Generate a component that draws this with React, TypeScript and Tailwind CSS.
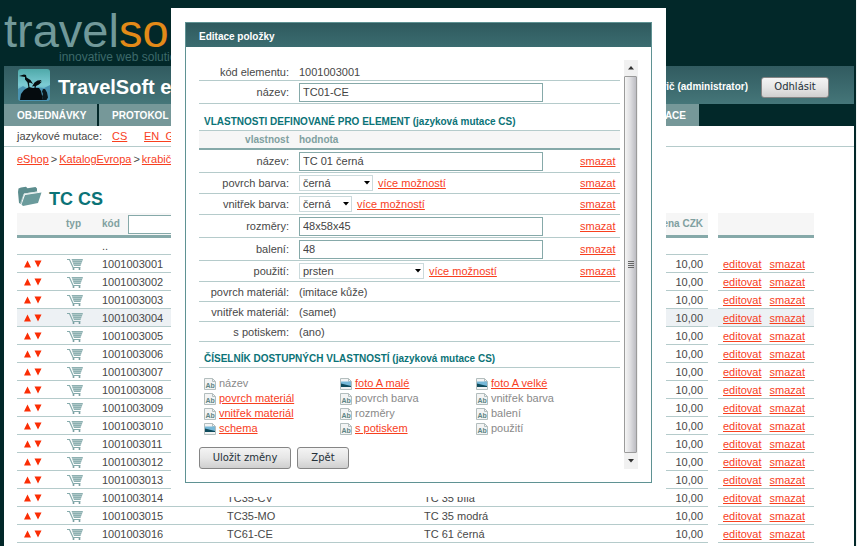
import type { ReactNode } from 'react';

type Item = { code: string; sku?: string; name?: string; active?: boolean };

const items: Item[] = [
  { code: '1001003001' },
  { code: '1001003002' },
  { code: '1001003003' },
  { code: '1001003004', active: true },
  { code: '1001003005' },
  { code: '1001003006' },
  { code: '1001003007' },
  { code: '1001003008' },
  { code: '1001003009' },
  { code: '1001003010' },
  { code: '1001003011' },
  { code: '1001003012' },
  { code: '1001003013' },
  { code: '1001003014', sku: 'TC35-CV', name: 'TC 35 bílá' },
  { code: '1001003015', sku: 'TC35-MO', name: 'TC 35 modrá' },
  { code: '1001003016', sku: 'TC61-CE', name: 'TC 61 černá' },
];

type Property = { label: string; kind: 'input' | 'select' | 'text'; value: string; width?: string };

const properties: Property[] = [
  { label: 'název', kind: 'input', value: 'TC 01 černá' },
  { label: 'povrch barva', kind: 'select', value: 'černá', width: 'w-[74px]' },
  { label: 'vnitřek barva', kind: 'select', value: 'černá', width: 'w-[53px]' },
  { label: 'rozměry', kind: 'input', value: '48x58x45' },
  { label: 'balení', kind: 'input', value: '48' },
  { label: 'použití', kind: 'select', value: 'prsten', width: 'w-[125px]' },
  { label: 'povrch materiál', kind: 'text', value: '(imitace kůže)' },
  { label: 'vnitřek materiál', kind: 'text', value: '(samet)' },
  { label: 's potiskem', kind: 'text', value: '(ano)' },
];

const rowHeight = { input: 'h-[23px]', select: 'h-[21px]', text: 'h-[20px]' };

const available = [
  { label: 'název' },
  { label: 'foto A malé', image: true, link: true },
  { label: 'foto A velké', image: true, link: true },
  { label: 'povrch materiál', link: true },
  { label: 'povrch barva' },
  { label: 'vnitřek barva' },
  { label: 'vnitřek materiál', link: true },
  { label: 'rozměry' },
  { label: 'balení' },
  { label: 'schema', image: true, link: true },
  { label: 's potiskem', link: true },
  { label: 'použití' },
];

function Link({ children }: { children: ReactNode }) {
  return <a href="#" className="text-[#f8401e] underline">{children}</a>;
}

function Button({ children, className = '' }: { children: ReactNode; className?: string }) {
  return (
    <button
      type="button"
      className={`rounded-[3px] border border-[#858585] bg-linear-to-b from-[#f4f4f4] via-[#e6e6e6] to-[#cfcfcf] font-['DejaVu_Sans',sans-serif] text-[10px] text-[#243038] ${className}`}
    >
      {children}
    </button>
  );
}

function BirdsLogo() {
  return (
    <svg viewBox="0 0 32 32" className="h-8 w-8">
      <defs>
        <linearGradient id="sky" x1="0" y1="0" x2="0" y2="1">
          <stop offset="0" stopColor="#4fa9a9" />
          <stop offset="0.5" stopColor="#7ccbd4" />
          <stop offset="1" stopColor="#3d88a6" />
        </linearGradient>
      </defs>
      <rect width="32" height="32" rx="3" fill="url(#sky)" />
      <path d="M0 20l5-3 5 3 8-2 8 1 6-3v13a3 3 0 0 1-3 3H3a3 3 0 0 1-3-3z" fill="#4a94b2" />
      <path d="M2 31l1-6 3-4 5-3 4 1 6 0 2 3 2 9z" fill="#050b0e" />
      <path d="M1 7l5-1.500 2 0.500 0.500 2.500 4 2.500 2.500 4-3-1.500-1 0.500 0.500 4.500h-1l-1-5-2.500-3L7 8z" fill="#050b0e" />
      <path d="M14 17.500l2.500-4 3-2L23.500 11l-1.500 2 2-0.500-3 3-3 1.500-0.500 2.500h-1V17z" fill="#050b0e" />
      <path d="M24 22.500l1-2.500 2 0 2 3.500 1 5-1.500 2.500h-3.500l-1-3.500 1-2.500z" fill="#0a181d" />
    </svg>
  );
}

function FolderIcon() {
  return (
    <svg viewBox="0 0 26 21" className="h-[21px] w-[26px]">
      <path d="M1 6l0.500-3.500L4 1.500l5-0.800 1.500 1.500 8-1.200 1.500 1.500v3L7 7.500 4 18l-2-1z" fill="#5c8d8e" />
      <path d="M4.500 18.500L8 9l16.500-2.500L21 17 6 20z" fill="#6b9b9c" />
      <path d="M3.500 17.500L7 8l14-2" fill="none" stroke="#c4d8d8" strokeWidth="0.700" />
    </svg>
  );
}

function CartIcon() {
  return (
    <svg viewBox="0 0 16 12" className="h-3 w-4">
      <path d="M0 1.500h2.500l3.500 8h7.500" fill="none" stroke="#86abac" strokeWidth="1.200" />
      <path d="M4.500 1H16l-2.500 7H7z" fill="#8db0b1" />
      <path d="M5 2.500h10.500M6 4.500h9M7 6.500h7" stroke="#c2d6d6" strokeWidth="0.600" />
      <circle cx="6.500" cy="11" r="1" fill="#6f9899" />
      <circle cx="12.500" cy="11" r="1" fill="#6f9899" />
    </svg>
  );
}

function SortArrows() {
  return (
    <svg viewBox="0 0 18 8" className="h-2 w-[18px]" fill="#fb2d04">
      <path d="M0 7.500L3.500 0.500L7 7.500zM10.500 0.500h7L14 7.500z" />
    </svg>
  );
}

function PropertyIcon({ image }: { image?: boolean }) {
  return (
    <svg viewBox="0 0 12 12" className="h-3 w-3 shrink-0">
      <path d="M0.500 0.500h8l3 3v8h-11z" fill="#f3f4f4" stroke="#b3bebe" />
      <path d="M8.500 0.500v3h3" fill="none" stroke="#b3bebe" />
      {image ? (
        <>
          <path d="M1 3.500h10v5.500H1z" fill="#76b8d8" />
          <path d="M1 5.500l4 1 6 1.500v1H1z" fill="#0e4b5c" />
        </>
      ) : (
        <text x="1.500" y="9.500" fontSize="7" fontWeight="bold" fill="#5f8585" fontFamily="Liberation Sans, sans-serif">Ab</text>
      )}
    </svg>
  );
}

function TextInput({ id, value }: { id: string; value: string }) {
  return <input id={id} defaultValue={value} className="block h-[19px] w-[244px] border border-[#86a9a9] bg-white px-[3px] text-[11px] text-[#444]" />;
}

function SelectBox({ id, value, width }: { id: string; value: string; width?: string }) {
  return (
    <div className="flex items-center gap-[5px]">
      <span className={`relative block ${width}`}>
        <select id={id} className="block h-4 w-full appearance-none border border-[#cbdadc] bg-white px-[3px] text-[11px] leading-[14px] text-[#444]">
          <option>{value}</option>
        </select>
        <svg viewBox="0 0 6 4" className="pointer-events-none absolute top-1.5 right-[3px] h-1 w-1.5">
          <path d="M0 0h6L3 3.500z" fill="#000" />
        </svg>
      </span>
      <Link>více možností</Link>
    </div>
  );
}

function ScrollBar() {
  return (
    <div className="flex w-3.5 flex-col bg-[#f1f1f1]">
      <button type="button" aria-label="Nahoru" className="flex h-4 items-center justify-center">
        <svg viewBox="0 0 6 4" className="h-1 w-1.5"><path d="M0 3.500h6L3 0z" fill="#333" /></svg>
      </button>
      <div className="flex w-[13px] flex-1 flex-col items-center justify-center gap-px rounded-[1px] border border-[#9b9b9b] bg-linear-to-r from-[#f5f5f5] via-[#dddde0] to-[#bcbcc2]">
        <span className="h-px w-1.5 bg-[#666]" />
        <span className="h-px w-1.5 bg-[#666]" />
        <span className="h-px w-1.5 bg-[#666]" />
        <span className="h-px w-1.5 bg-[#666]" />
      </div>
      <button type="button" aria-label="Dolů" className="flex h-4 items-center justify-center">
        <svg viewBox="0 0 6 4" className="h-1 w-1.5"><path d="M0 0h6L3 3.500z" fill="#333" /></svg>
      </button>
    </div>
  );
}

function EditDialog() {
  return (
    <div role="dialog" aria-labelledby="dialog-title" className="absolute top-2 left-[171px] w-[495px] bg-white px-[14px] py-[14px]">
      <div className="border border-[#5f9293]">
        <h2 id="dialog-title" className="flex h-[24px] items-center bg-linear-to-b from-[#2f5a5e] to-[#3b6c70] px-[13px] pt-1 text-[10px] font-bold text-white">
          Editace položky
        </h2>
        <div className="flex gap-1 p-[13px]">
          <form className="flex-1 pt-1">
            <table className="w-full table-fixed border-separate border-spacing-0">
              <colgroup>
                <col className="w-[100px]" />
                <col />
              </colgroup>
              <tbody>
                <tr className="h-[17px]">
                  <td className="border-b border-[#b5cbcb] pr-2.5 text-right">kód elementu:</td>
                  <td className="border-b border-[#b5cbcb]">1001003001</td>
                </tr>
                <tr className="h-[23px]">
                  <td className="border-b border-[#b5cbcb] pr-2.5 text-right"><label htmlFor="element">název:</label></td>
                  <td className="border-b border-[#b5cbcb]"><TextInput id="element" value="TC01-CE" /></td>
                </tr>
              </tbody>
            </table>
            <h3 className="flex h-[26px] items-end px-[5px] pb-px text-[10px] font-bold text-[#0b7377]">
              VLASTNOSTI DEFINOVANÉ PRO ELEMENT (jazyková mutace CS)
            </h3>
            <table className="w-full table-fixed border-separate border-spacing-0">
              <colgroup>
                <col className="w-[100px]" />
                <col />
                <col className="w-[40px]" />
              </colgroup>
              <thead>
                <tr className="h-[20px] bg-[#f6f6f6] text-[10px] text-[#80a0a0]">
                  <th className="border-t border-b-2 border-t-[#b5cbcb] border-b-[#86a9a9] pr-2.5 text-right">vlastnost</th>
                  <th className="border-t border-b-2 border-t-[#b5cbcb] border-b-[#86a9a9] text-left">hodnota</th>
                  <th className="border-t border-b-2 border-t-[#b5cbcb] border-b-[#86a9a9]" />
                </tr>
              </thead>
              <tbody>
                {properties.map(p => (
                  <tr key={p.label} className={rowHeight[p.kind]}>
                    <td className="border-b border-[#b5cbcb] pr-2.5 text-right">
                      {p.kind === 'text' ? `${p.label}:` : <label htmlFor={p.label}>{p.label}:</label>}
                    </td>
                    <td className="border-b border-[#b5cbcb]">
                      {p.kind === 'input' && <TextInput id={p.label} value={p.value} />}
                      {p.kind === 'select' && <SelectBox id={p.label} value={p.value} width={p.width} />}
                      {p.kind === 'text' && p.value}
                    </td>
                    <td className="border-b border-[#b5cbcb] pr-[5px] text-right">{p.kind !== 'text' && <Link>smazat</Link>}</td>
                  </tr>
                ))}
              </tbody>
            </table>
            <h3 className="flex h-[26px] items-end border-b border-[#b5cbcb] px-[5px] pb-px text-[10px] font-bold text-[#0b7377]">
              ČÍSELNÍK DOSTUPNÝCH VLASTNOSTÍ (jazyková mutace CS)
            </h3>
            <ul className="grid grid-cols-[136px_136px_1fr] pt-2 pl-[5px] leading-[15px]">
              {available.map(a => (
                <li key={a.label} className="flex items-center gap-[3px] text-[#8a8a8a]">
                  <PropertyIcon image={a.image} />
                  {a.link ? <Link>{a.label}</Link> : a.label}
                </li>
              ))}
            </ul>
            <div className="flex gap-1.5 pt-[11px]">
              <Button className="h-[22px] w-[92px]">Uložit změny</Button>
              <Button className="h-[22px] w-[52px]">Zpět</Button>
            </div>
          </form>
          <ScrollBar />
        </div>
      </div>
    </div>
  );
}

function CatalogTable() {
  const line = 'border-b border-[#b5cbcb]';
  const head = 'border-b-[3px] border-[#86a9a9] bg-[#f6f6f6]';
  return (
    <table className="w-full table-fixed border-separate border-spacing-0">
      <colgroup>
        <col className="w-10" />
        <col className="w-10" />
        <col className="w-[125px]" />
        <col className="w-[197px]" />
        <col />
        <col className="w-[60px]" />
        <col className="w-2.5" />
        <col className="w-24" />
      </colgroup>
      <thead>
        <tr className="h-[25px] text-left text-[10px] text-[#80a0a0]">
          <th className={head} />
          <th className={`${head} pl-[9px]`}>typ</th>
          <th className={`${head} pl-[5px]`}>
            <label className="flex items-center gap-2">
              kód
              <input className="h-[19px] w-20 border border-[#86a9a9] bg-white" />
            </label>
          </th>
          <th className={head} />
          <th className={head} />
          <th className={`${head} pr-[5px] text-right whitespace-nowrap`}>cena CZK</th>
          <th />
          <th className={head} />
        </tr>
      </thead>
      <tbody>
        <tr className="h-[17px]">
          <td className={line} />
          <td className={line} />
          <td className={`${line} pl-[5px]`}>..</td>
          <td className={line} />
          <td className={line} />
          <td className={line} />
          <td />
          <td />
        </tr>
        {items.map(item => (
          <tr key={item.code} className={`h-[18px] ${item.active ? 'bg-[#edf1f4]' : ''}`}>
            <td className={`${line} pl-[7px]`}><SortArrows /></td>
            <td className={`${line} pl-2.5`}><CartIcon /></td>
            <td className={`${line} pl-[5px]`}>{item.code}</td>
            <td className={`${line} pl-[5px]`}>{item.sku}</td>
            <td className={`${line} pl-[5px]`}>{item.name}</td>
            <td className={`${line} pr-[5px] text-right`}>10,00</td>
            <td />
            <td className={`${line} pl-[5px]`}>
              <span className="flex gap-2"><Link>editovat</Link><Link>smazat</Link></span>
            </td>
          </tr>
        ))}
      </tbody>
    </table>
  );
}

export default function App() {
  return (
    <div className="relative flex min-h-screen flex-col border-r border-[#f4f4f4] bg-[#022829] pr-0.5 pl-1 font-['Liberation_Sans',Arial,sans-serif] text-[11px] leading-[14px] text-[#484848]">
      <div className="flex h-[66px] flex-col overflow-hidden pt-2">
        <div className="text-[47px] leading-[46px] text-[#71999a]">
          travel<span className="text-[#e38a18]">so</span>
        </div>
        <div className="-mt-1 pl-[55px] text-[12px] leading-[14px] text-[#3d6a6b]">innovative web solutions</div>
      </div>

      <header className="flex h-[38px] items-center bg-linear-to-b from-[#315b60] to-[#457679] pr-[25px] pl-[14px] text-white">
        <BirdsLogo />
        <h1 className="flex-1 pt-1 pl-2 text-[20px] leading-6 font-bold">TravelSoft eShop</h1>
        <span className="pt-1 pr-[13px] text-[10px] font-bold">Petrovič (administrator)</span>
        <Button className="mt-1 h-[21px] w-[68px]">Odhlásit</Button>
      </header>

      <nav className="flex h-[22px] gap-[2px] text-[10px] leading-[22px] font-bold text-white">
        <a href="#" className="w-[93px] bg-[#769899] pt-px pl-[13px]">OBJEDNÁVKY</a>
        <a href="#" className="w-[93px] bg-[#769899] pt-px pl-[13px]">PROTOKOL</a>
        <a href="#" className="w-[505px] bg-[#769899] pt-px pr-[13px] text-right">ADMINISTRACE</a>
      </nav>

      <main className="flex-1 bg-white">
        <div className="flex h-[21px] items-center border-b border-[#b5cbcb] pl-[13px]">
          <span className="w-[95px]">jazykové mutace:</span>
          <span className="w-8"><Link>CS</Link></span>
          <Link>EN_GB</Link>
        </div>
        <div className="flex gap-0.5 pt-[5px] pl-[13px]">
          <Link>eShop</Link> &gt; <Link>KatalogEvropa</Link> &gt; <Link>krabičky</Link>
        </div>
        <div className="pt-5 pr-10 pl-[13px]">
          <h2 className="flex items-start gap-1.5 pb-[3px] text-[18px] leading-[21px] font-bold text-[#0b7377]">
            <FolderIcon />
            <span className="pt-[3px]">TC CS</span>
          </h2>
          <CatalogTable />
        </div>
      </main>

      <EditDialog />
    </div>
  );
}
